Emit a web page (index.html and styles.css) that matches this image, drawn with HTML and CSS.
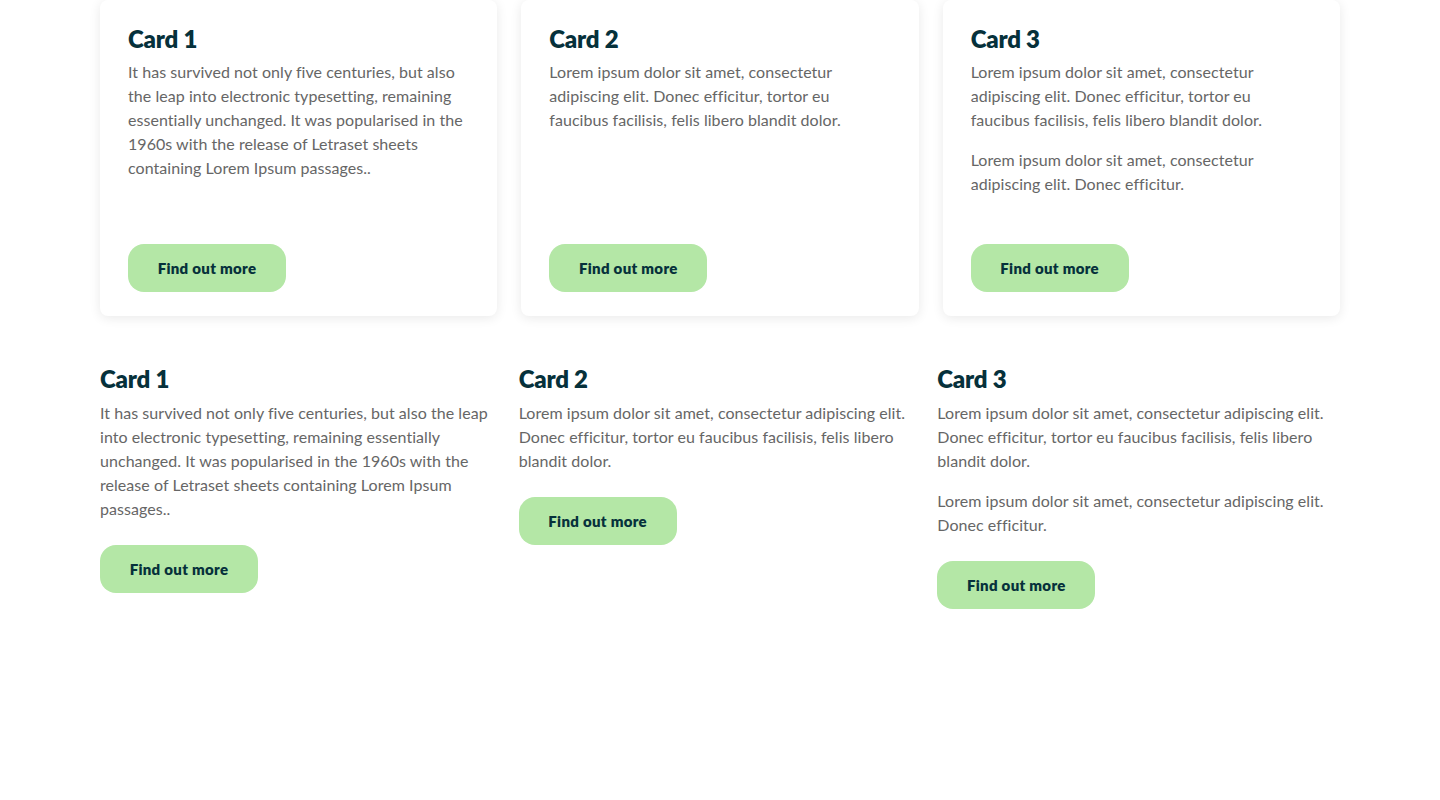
FILE: index.html
```html
<!DOCTYPE html>
<html lang="en">
<head>
<meta charset="utf-8">
<title>Cards</title>
<link rel="stylesheet" href="styles.css">
</head>
<body>
<main class="page">
  <section class="grid grid-boxed">
    <article class="card card-boxed">
      <div class="card-body">
        <h2 class="card-title">Card 1</h2>
        <p>It has survived not only five centuries, but also the leap into electronic typesetting, remaining essentially unchanged. It was popularised in the 1960s with the release of Letraset sheets containing Lorem Ipsum passages..</p>
      </div>
      <a class="btn" href="#">Find out more</a>
    </article>
    <article class="card card-boxed">
      <div class="card-body">
        <h2 class="card-title">Card 2</h2>
        <p>Lorem ipsum dolor sit amet, consectetur adipiscing elit. Donec efficitur, tortor eu faucibus facilisis, felis libero blandit dolor.</p>
      </div>
      <a class="btn" href="#">Find out more</a>
    </article>
    <article class="card card-boxed">
      <div class="card-body">
        <h2 class="card-title">Card 3</h2>
        <p>Lorem ipsum dolor sit amet, consectetur adipiscing elit. Donec efficitur, tortor eu faucibus facilisis, felis libero blandit dolor.</p>
        <p>Lorem ipsum dolor sit amet, consectetur adipiscing elit. Donec efficitur.</p>
      </div>
      <a class="btn" href="#">Find out more</a>
    </article>
  </section>

  <section class="grid grid-plain">
    <article class="card card-plain">
      <div class="card-body">
        <h2 class="card-title">Card 1</h2>
        <p>It has survived not only five centuries, but also the leap into electronic typesetting, remaining essentially unchanged. It was popularised in the 1960s with the release of Letraset sheets containing Lorem Ipsum passages..</p>
      </div>
      <a class="btn" href="#">Find out more</a>
    </article>
    <article class="card card-plain">
      <div class="card-body">
        <h2 class="card-title">Card 2</h2>
        <p>Lorem ipsum dolor sit amet, consectetur adipiscing elit. Donec efficitur, tortor eu faucibus facilisis, felis libero blandit dolor.</p>
      </div>
      <a class="btn" href="#">Find out more</a>
    </article>
    <article class="card card-plain">
      <div class="card-body">
        <h2 class="card-title">Card 3</h2>
        <p>Lorem ipsum dolor sit amet, consectetur adipiscing elit. Donec efficitur, tortor eu faucibus facilisis, felis libero blandit dolor.</p>
        <p>Lorem ipsum dolor sit amet, consectetur adipiscing elit. Donec efficitur.</p>
      </div>
      <a class="btn" href="#">Find out more</a>
    </article>
  </section>
</main>
</body>
</html>
```

FILE: styles.css
```css
* { box-sizing: border-box; }

html, body {
  margin: 0;
  padding: 0;
  background: #ffffff;
}

body {
  font-family: Lato, "Liberation Sans", sans-serif;
  color: #666666;
}

.page {
  width: 1240px;
  margin: 0 auto;
}

.grid {
  display: grid;
  grid-template-columns: repeat(3, 1fr);
  align-items: stretch;
}

.grid-boxed {
  column-gap: 24px;
}

.grid-plain {
  column-gap: 16px;
  margin-top: 48px;
  align-items: start;
}

.card {
  display: flex;
  flex-direction: column;
  align-items: flex-start;
}

.card-boxed {
  background: #ffffff;
  border-radius: 8px;
  box-shadow: 0 2px 12px rgba(0, 0, 0, 0.09);
  padding: 24px 28px 24px;
}

.card-body {
  flex: 1;
  width: 100%;
}

.card-boxed .card-body {
  margin-bottom: 48px;
}

.card-plain .card-body {
  margin-bottom: 24px;
}

.card-title {
  margin: 0 0 6px;
  font-size: 24px;
  line-height: 30px;
  font-weight: 800;
  color: #06313b;
  letter-spacing: -0.2px;
}

.card-plain .card-title {
  margin-bottom: 7px;
}

.card-body p {
  margin: 0 0 16px;
  font-size: 16px;
  line-height: 24px;
  letter-spacing: 0.05px;
  color: #666666;
}

.card-body p:last-child {
  margin-bottom: 0;
}

.btn {
  display: inline-flex;
  align-items: center;
  justify-content: center;
  height: 48px;
  width: 158px;
  border-radius: 16px;
  background: #b4e7a6;
  color: #06313b;
  font-size: 15px;
  font-weight: 800;
  letter-spacing: 0.3px;
  text-decoration: none;
}
```
